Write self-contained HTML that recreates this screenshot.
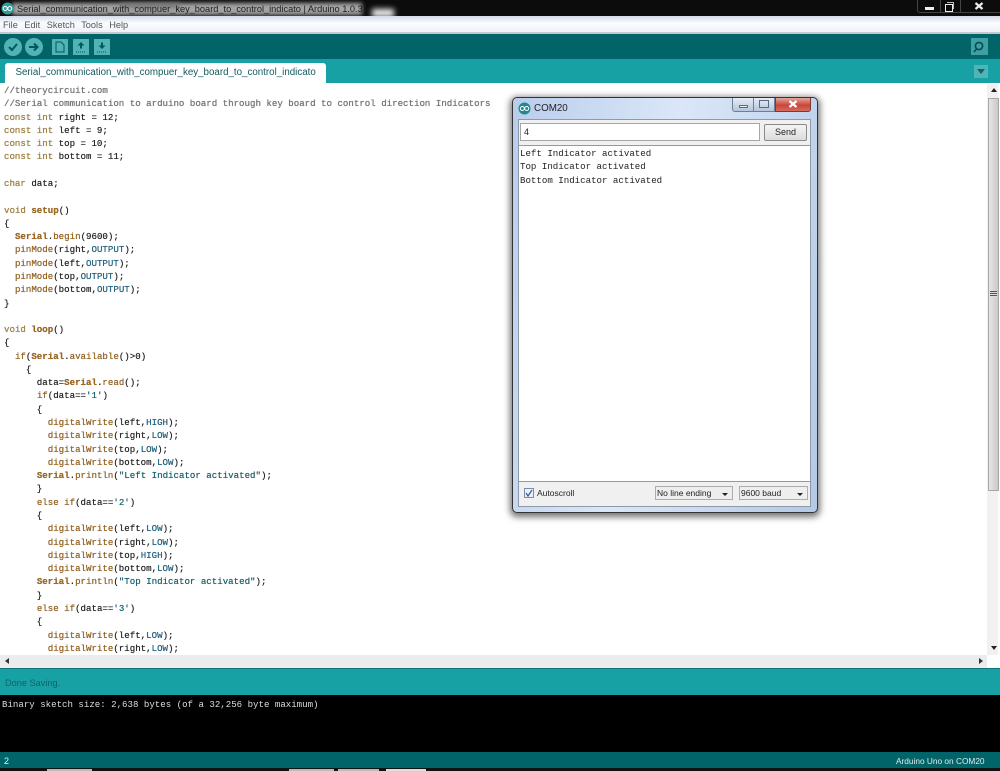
<!DOCTYPE html>
<html><head><meta charset="utf-8">
<style>
html,body{margin:0;padding:0;background:#000}
#r{position:relative;width:1000px;height:771px;overflow:hidden;background:#fff;font-family:"Liberation Sans",sans-serif;filter:blur(.3px)}
.a{position:absolute}
pre,.m{font-family:"Liberation Mono",monospace}
#code{position:absolute;left:4px;top:84px;margin:0;font-size:9.12px;line-height:13.286px;color:#222;text-shadow:0 0 .4px #333;white-space:pre}
.k{color:#a5691a}.b{color:#a5691a;font-weight:bold}.c{color:#7c7c7c}.t{color:#1f6b8c}.s{color:#0f6a7a}.ty{color:#b08a3c}
.wb{position:absolute;top:0;height:13px;border:1px solid #444;border-top:0;box-sizing:border-box}
.sel{position:absolute;top:486px;height:14px;background:#eee;border:1px solid #adadad;box-sizing:border-box;font-size:8.5px;line-height:12px;padding-left:1px;color:#222}
.sel i{position:absolute;right:4px;top:6px;border:3px solid transparent;border-top-color:#222;border-bottom:0}
.mono{font-family:"Liberation Mono",monospace;font-size:9.12px;line-height:13.3px;color:#222}
</style></head><body><div id="r">

<!-- title bar -->
<div class="a" style="left:0;top:0;width:1000px;height:16px;background:#0c0c0c"></div>
<div class="a" style="left:12px;top:3px;width:350px;height:12px;background:#a4a4a4;filter:blur(2px)"></div>
<div class="a" style="left:120px;top:3px;width:60px;height:5px;background:#777;filter:blur(2px)"></div>
<div class="a" style="left:372px;top:9px;width:22px;height:8px;background:#f4f4f4;filter:blur(3px)"></div>
<svg class="a" style="left:1px;top:2px" width="13" height="13" viewBox="0 0 13 13"><circle cx="6.5" cy="6.5" r="6" fill="#2f9c9c"/><circle cx="4.2" cy="6.5" r="2" fill="none" stroke="#fff" stroke-width="1"/><circle cx="8.8" cy="6.5" r="2" fill="none" stroke="#fff" stroke-width="1"/></svg>
<div class="a" style="left:17px;top:2.500px;font-size:9.220px;line-height:13px;color:#1e1e1e;white-space:nowrap">Serial_communication_with_compuer_key_board_to_control_indicato | Arduino 1.0.3</div>
<div class="wb" style="left:917px;width:24px;border-radius:0 0 0 3px"></div>
<div class="wb" style="left:940px;width:21px"></div>
<div class="wb" style="left:960px;width:40px;border-right:0"></div>
<div class="a" style="left:925px;top:7px;width:9px;height:3px;background:#eee"></div>
<div class="a" style="left:945px;top:4px;width:6px;height:6px;border:1px solid #eee"></div>
<div class="a" style="left:947px;top:2px;width:6px;height:6px;border:1px solid #bbb;border-left:0;border-bottom:0"></div>
<svg class="a" style="left:974px;top:2px" width="10" height="8"><path d="M1.500 1l7 6M8.500 1l-7 6" stroke="#eee" stroke-width="2.200"/></svg>

<!-- menu -->
<div class="a" style="left:0;top:16px;width:1000px;height:16px;background:linear-gradient(#d6dbe8,#fbfcff 45%,#eef0f6)"></div>
<div class="a" style="left:3px;top:19px;font-size:9.200px;line-height:12px;color:#555;word-spacing:4px;white-space:nowrap">File Edit Sketch Tools Help</div>

<!-- toolbar -->
<div class="a" style="left:0;top:32px;width:1000px;height:2px;background:#c5c8cc"></div>
<div class="a" style="left:0;top:34px;width:1000px;height:25px;background:#006468"></div>
<svg class="a" style="left:0;top:34px" width="120" height="25" viewBox="0 0 120 25">
<circle cx="13" cy="13" r="9" fill="#52b3b4"/><path d="M9 13l3 3 5-6" fill="none" stroke="#00585c" stroke-width="2"/>
<circle cx="34" cy="13" r="9" fill="#52b3b4"/><path d="M29 13h8M34 9.5l3.5 3.5-3.5 3.5" fill="none" stroke="#00585c" stroke-width="2"/>
<rect x="52" y="5" width="16" height="16" fill="#52b3b4"/><path d="M56 8h5l3 3v7h-8z" fill="none" stroke="#00585c"/>
<rect x="73" y="5" width="16" height="16" fill="#52b3b4"/><path d="M81 8l-3.5 3.500h2.500v3h2v-3h2.500z" fill="#00585c"/><path d="M76 18h10" stroke="#00585c" stroke-dasharray="1 1"/>
<rect x="94" y="5" width="16" height="16" fill="#52b3b4"/><path d="M102 15l-3.500-3.500h2.500v-3h2v3h2.500z" fill="#00585c"/><path d="M97 18h10" stroke="#00585c" stroke-dasharray="1 1"/>
</svg>
<svg class="a" style="left:971px;top:38px" width="17" height="17" viewBox="0 0 17 17"><rect width="17" height="17" fill="#3f9fa2"/><circle cx="8" cy="8" r="3.600" fill="none" stroke="#004f54" stroke-width="1.600"/><path d="M5.500 11l-2.500 3" stroke="#004f54" stroke-width="1.600"/></svg>

<!-- tab strip -->
<div class="a" style="left:0;top:59px;width:1000px;height:24px;background:#17a1a5"></div>
<div class="a" style="left:5px;top:63px;width:321px;height:20px;background:#fff;border-radius:3px 3px 0 0"></div>
<div class="a" style="left:15.500px;top:66px;font-size:9.750px;line-height:13px;color:#125a5e;white-space:nowrap">Serial_communication_with_compuer_key_board_to_control_indicato</div>
<div class="a" style="left:974px;top:65px;width:14px;height:13px;background:#4fb5b7"></div>
<div class="a" style="left:977px;top:69px;border:4px solid transparent;border-top:5px solid #1c5f64;border-bottom:0"></div>

<!-- code -->
<pre id="code"><span class="c">//theorycircuit.com
//Serial communication to arduino board through key board to control direction Indicators</span>
<span class="ty">const int</span> right = 12;
<span class="ty">const int</span> left = 9;
<span class="ty">const int</span> top = 10;
<span class="ty">const int</span> bottom = 11;

<span class="ty">char</span> data;

<span class="ty">void</span> <span class="b">setup</span>()
{
  <span class="b">Serial</span>.<span class="k">begin</span>(9600);
  <span class="k">pinMode</span>(right,<span class="t">OUTPUT</span>);
  <span class="k">pinMode</span>(left,<span class="t">OUTPUT</span>);
  <span class="k">pinMode</span>(top,<span class="t">OUTPUT</span>);
  <span class="k">pinMode</span>(bottom,<span class="t">OUTPUT</span>);
}

<span class="ty">void</span> <span class="b">loop</span>()
{
  <span class="k">if</span>(<span class="b">Serial</span>.<span class="k">available</span>()&gt;0)
    {
      data=<span class="b">Serial</span>.<span class="k">read</span>();
      <span class="k">if</span>(data==<span class="s">'1'</span>)
      {
        <span class="k">digitalWrite</span>(left,<span class="t">HIGH</span>);
        <span class="k">digitalWrite</span>(right,<span class="t">LOW</span>);
        <span class="k">digitalWrite</span>(top,<span class="t">LOW</span>);
        <span class="k">digitalWrite</span>(bottom,<span class="t">LOW</span>);
      <span class="b">Serial</span>.<span class="k">println</span>(<span class="s">"Left Indicator activated"</span>);
      }
      <span class="k">else if</span>(data==<span class="s">'2'</span>)
      {
        <span class="k">digitalWrite</span>(left,<span class="t">LOW</span>);
        <span class="k">digitalWrite</span>(right,<span class="t">LOW</span>);
        <span class="k">digitalWrite</span>(top,<span class="t">HIGH</span>);
        <span class="k">digitalWrite</span>(bottom,<span class="t">LOW</span>);
      <span class="b">Serial</span>.<span class="k">println</span>(<span class="s">"Top Indicator activated"</span>);
      }
      <span class="k">else if</span>(data==<span class="s">'3'</span>)
      {
        <span class="k">digitalWrite</span>(left,<span class="t">LOW</span>);
        <span class="k">digitalWrite</span>(right,<span class="t">LOW</span>);</pre>

<!-- vertical scrollbar -->
<div class="a" style="left:987px;top:84px;width:13px;height:571px;background:#f1f1f1"></div>
<div class="a" style="left:998px;top:84px;width:2px;height:571px;background:#fff"></div>
<div class="a" style="left:988px;top:98px;width:11px;height:393px;background:linear-gradient(90deg,#e6e6e6,#d8d8d8 50%,#c8c8c8);border:1px solid #a8a8a8;box-sizing:border-box"></div>
<div class="a" style="left:990px;top:291px;width:7px;height:6px;background:repeating-linear-gradient(#555 0 1px,#ddd 1px 2px)"></div>
<div class="a" style="left:990.500px;top:88px;border:3px solid transparent;border-bottom:4px solid #222;border-top:0"></div>
<div class="a" style="left:990.500px;top:646px;border:3px solid transparent;border-top:4px solid #222;border-bottom:0"></div>

<!-- horizontal scrollbar -->
<div class="a" style="left:0;top:655px;width:987px;height:13px;background:#ececec"></div>
<div class="a" style="left:5px;top:658px;border:3px solid transparent;border-right:4px solid #333;border-left:0"></div>
<div class="a" style="left:979px;top:658px;border:3px solid transparent;border-left:4px solid #333;border-right:0"></div>
<div class="a" style="left:987px;top:655px;width:13px;height:13px;background:#fff"></div>

<!-- status -->
<div class="a" style="left:0;top:668px;width:1000px;height:27px;background:#17a1a5;border-top:1px solid #0f7478;box-sizing:border-box"></div>
<div class="a" style="left:5px;top:677px;font-size:9.200px;line-height:12px;color:#0c6468;white-space:nowrap">Done Saving.</div>
<div class="a" style="left:0;top:695px;width:1000px;height:57px;background:#000"></div>
<div class="a m" style="left:2px;top:698.500px;font-size:9.100px;line-height:12px;color:#ddd;white-space:pre">Binary sketch size: 2,638 bytes (of a 32,256 byte maximum)</div>
<div class="a" style="left:0;top:752px;width:1000px;height:16px;background:#006468"></div>
<div class="a" style="left:4px;top:755px;font-size:9px;line-height:12px;color:#cfe;white-space:nowrap">2</div>
<div class="a" style="left:896px;top:755px;font-size:8.300px;line-height:12px;color:#dfecec;white-space:nowrap">Arduino Uno on COM20</div>
<div class="a" style="left:0;top:768px;width:1000px;height:3px;background:#111"></div>
<div class="a" style="left:47px;top:769px;width:45px;height:2px;background:#bbb"></div>
<div class="a" style="left:289px;top:769px;width:45px;height:2px;background:#bbb"></div>
<div class="a" style="left:338px;top:769px;width:41px;height:2px;background:#bbb"></div>
<div class="a" style="left:386px;top:769px;width:40px;height:2px;background:#ddd"></div>

<!-- serial monitor -->
<div class="a" style="left:512px;top:97px;width:306px;height:416px;border-radius:5px;background:linear-gradient(100deg,#b9cdec,#dbe7f8 45%,#b4c9e6);border:1px solid #333;box-sizing:border-box;box-shadow:0 2px 7px 2px rgba(0,0,0,.55)"></div>
<svg class="a" style="left:518px;top:102px" width="13" height="13" viewBox="0 0 13 13"><circle cx="6.500" cy="6.500" r="6" fill="#1d8a8e"/><circle cx="4.300" cy="6.500" r="2" fill="none" stroke="#fff"/><circle cx="8.700" cy="6.500" r="2" fill="none" stroke="#fff"/></svg>
<div class="a" style="left:534px;top:102px;font-size:9.800px;line-height:13px;color:#222">COM20</div>
<div class="a" style="left:732px;top:98px;width:22px;height:14px;box-sizing:border-box;border:1px solid #6f7f94;border-top:0;border-radius:0 0 0 3px;background:linear-gradient(#e6edf7,#b5c5dc)"></div>
<div class="a" style="left:754px;top:98px;width:21px;height:14px;box-sizing:border-box;border:1px solid #6f7f94;border-top:0;border-left:0;background:linear-gradient(#e6edf7,#b5c5dc)"></div>
<div class="a" style="left:775px;top:98px;width:36px;height:14px;box-sizing:border-box;border:1px solid #7a3b35;border-top:0;border-radius:0 0 3px 0;background:linear-gradient(#e6a99e,#c8463a 55%,#d66a5c)"></div>
<div class="a" style="left:739px;top:105px;width:9px;height:3px;border:1px solid #5c6b7f;box-sizing:border-box;background:#eee"></div>
<div class="a" style="left:759px;top:100px;width:10px;height:8px;border:1px solid #5c6b7f;box-sizing:border-box"></div>
<svg class="a" style="left:788px;top:100px" width="10" height="8"><path d="M1.500 1l7 6M8.500 1l-7 6" stroke="#fff" stroke-width="2.200"/></svg>

<div class="a" style="left:518px;top:119px;width:293px;height:26px;background:#f0f0f0;border:1px solid #8e9aa8;border-bottom:0;box-sizing:border-box"></div>
<div class="a" style="left:520px;top:123px;width:240px;height:18px;background:#fff;border:1px solid #a6a6a6;box-sizing:border-box"></div>
<div class="a" style="left:524px;top:126px;font-size:9px;line-height:12px;color:#222">4</div>
<div class="a" style="left:764px;top:124px;width:43px;height:17px;background:linear-gradient(#f4f4f4,#dcdcdc);border:1px solid #8a8a8a;border-radius:2px;box-sizing:border-box;font-size:9px;line-height:15px;text-align:center;color:#222">Send</div>
<div class="a" style="left:518px;top:145px;width:293px;height:337px;background:#fff;border:1px solid #8e9aa8;box-sizing:border-box"></div>
<div class="a mono" style="left:520px;top:147px;white-space:pre">Left Indicator activated
Top Indicator activated
Bottom Indicator activated</div>
<div class="a" style="left:518px;top:482px;width:293px;height:25px;background:#f0f0f0;border:1px solid #8e9aa8;border-top:0;box-sizing:border-box"></div>
<div class="a" style="left:524px;top:488px;width:10px;height:10px;background:#eaf0fa;border:1px solid #7f8ea8;box-sizing:border-box"></div>
<svg class="a" style="left:524px;top:488px" width="10" height="10"><path d="M2 5l2 3 4-6" fill="none" stroke="#3b5a94" stroke-width="1.200"/></svg>
<div class="a" style="left:537px;top:487px;font-size:8.500px;line-height:12px;color:#222">Autoscroll</div>
<div class="sel" style="left:655px;width:78px">No line ending<i></i></div>
<div class="sel" style="left:739px;width:69px">9600 baud<i></i></div>

</div></body></html>
